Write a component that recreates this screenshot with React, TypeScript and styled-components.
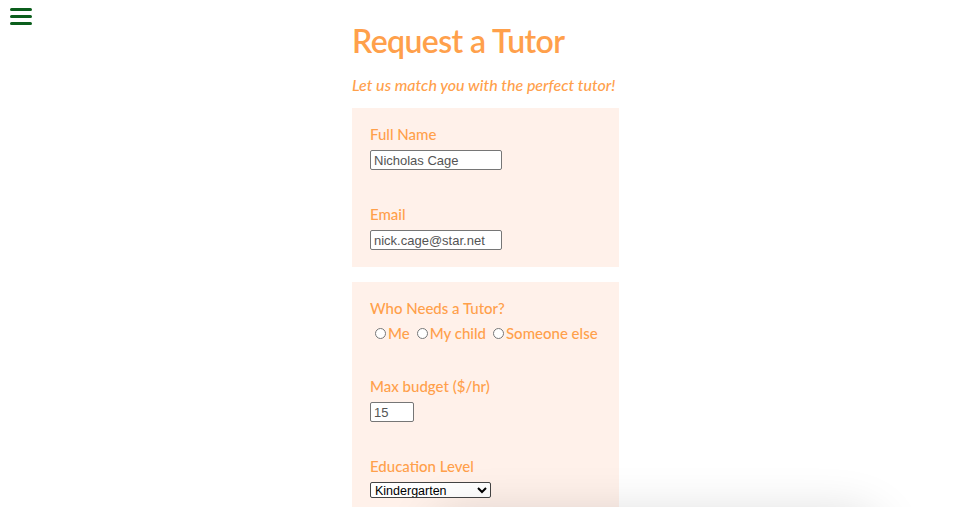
import React from "react";
import styled, { createGlobalStyle } from "styled-components";

const orange = "#ffa04b";
const cardBg = "#fff1ea";

const GlobalStyle = createGlobalStyle`
	body {
		margin: 0;
		background: #ffffff;
		font-family: "Lato", "Noto Sans", sans-serif;
		overflow: hidden;
	}
`;

const MenuButton = styled.button`
	position: fixed;
	top: 8px;
	left: 10px;
	width: 22px;
	height: 17px;
	padding: 0;
	border: none;
	background: transparent;
	display: flex;
	flex-direction: column;
	justify-content: space-between;
	cursor: pointer;

	span {
		display: block;
		height: 3px;
		width: 100%;
		border-radius: 2px;
		background: #0b5e1c;
	}
`;

const Page = styled.main`
	width: 267px;
	margin: 0 auto;
`;

const Title = styled.h1`
	margin: 22px 0 0;
	font-size: 32px;
	line-height: 38px;
	font-weight: 600;
	letter-spacing: -0.6px;
	color: ${orange};
	white-space: nowrap;
`;

const Subtitle = styled.p`
	margin: 16px 0 0;
	font-size: 16px;
	line-height: 18px;
	font-style: italic;
	font-weight: 500;
	color: ${orange};
	white-space: nowrap;
`;

const Card = styled.section<{ $top: number }>`
	margin-top: ${({ $top }) => $top}px;
	background: ${cardBg};
	padding: 18px 18px 17px;
	display: flex;
	flex-direction: column;
	gap: 36px;
`;

const Field = styled.div<{ $gap?: number }>`
	display: flex;
	flex-direction: column;
	align-items: flex-start;
	gap: ${({ $gap }) => $gap ?? 8}px;
`;

const Label = styled.label`
	font-size: 15px;
	line-height: 16px;
	font-weight: 500;
	color: ${orange};
`;

const TextInput = styled.input<{ $width: number }>`
	box-sizing: border-box;
	width: ${({ $width }) => $width}px;
	height: 20px;
	margin: 0;
	padding: 1px 3px;
	border: 1px solid #767676;
	border-radius: 2px;
	background: #ffffff;
	font-family: "Liberation Sans", Arial, sans-serif;
	font-size: 13px;
	color: #545454;
`;

const RadioRow = styled.div`
	display: flex;
	align-items: center;
	height: 18px;
	padding-left: 5px;
	white-space: nowrap;
`;

const RadioOption = styled.label`
	display: flex;
	flex-shrink: 0;
	align-items: center;
	margin-right: 7px;
	font-size: 15px;
	font-weight: 500;
	color: ${orange};

	input {
		width: 11px;
		height: 11px;
		margin: 0 2px 0 0;
	}
`;

const Select = styled.select`
	box-sizing: border-box;
	width: 121px;
	height: 16px;
	margin: 0;
	padding: 0;
	border: 1px solid #444;
	border-radius: 2px;
	background: #ffffff;
	font-family: "Liberation Sans", Arial, sans-serif;
	font-size: 12.5px;
	color: #000;
`;

const BottomShade = styled.div`
	position: fixed;
	top: 515px;
	left: 430px;
	width: 450px;
	height: 60px;
	border-radius: 30px;
	background: #fff;
	box-shadow: 0 0 50px rgba(0, 0, 0, 0.16);
`;

export default function App() {
	return (
		<>
			<GlobalStyle />
			<MenuButton aria-label="menu">
				<span />
				<span />
				<span />
			</MenuButton>
			<Page>
				<Title>Request a Tutor</Title>
				<Subtitle>Let us match you with the perfect tutor!</Subtitle>
				<Card $top={14}>
					<Field>
						<Label htmlFor="name">Full Name</Label>
						<TextInput id="name" $width={132} defaultValue="Nicholas Cage" />
					</Field>
					<Field>
						<Label htmlFor="email">Email</Label>
						<TextInput id="email" $width={132} defaultValue="nick.cage@star.net" />
					</Field>
				</Card>
				<Card $top={15}>
					<Field>
						<Label>Who Needs a Tutor?</Label>
						<RadioRow>
							<RadioOption>
								<input type="radio" name="who" />
								Me
							</RadioOption>
							<RadioOption>
								<input type="radio" name="who" />
								My child
							</RadioOption>
							<RadioOption>
								<input type="radio" name="who" />
								Someone else
							</RadioOption>
						</RadioRow>
					</Field>
					<Field>
						<Label htmlFor="budget">Max budget ($/hr)</Label>
						<TextInput id="budget" $width={44} defaultValue="15" />
					</Field>
					<Field $gap={8}>
						<Label htmlFor="level">Education Level</Label>
						<Select id="level" defaultValue="k">
							<option value="k">Kindergarten</option>
							<option value="e">Elementary</option>
							<option value="m">Middle School</option>
							<option value="h">High School</option>
						</Select>
					</Field>
				</Card>
			</Page>
			<BottomShade />
		</>
	);
}
